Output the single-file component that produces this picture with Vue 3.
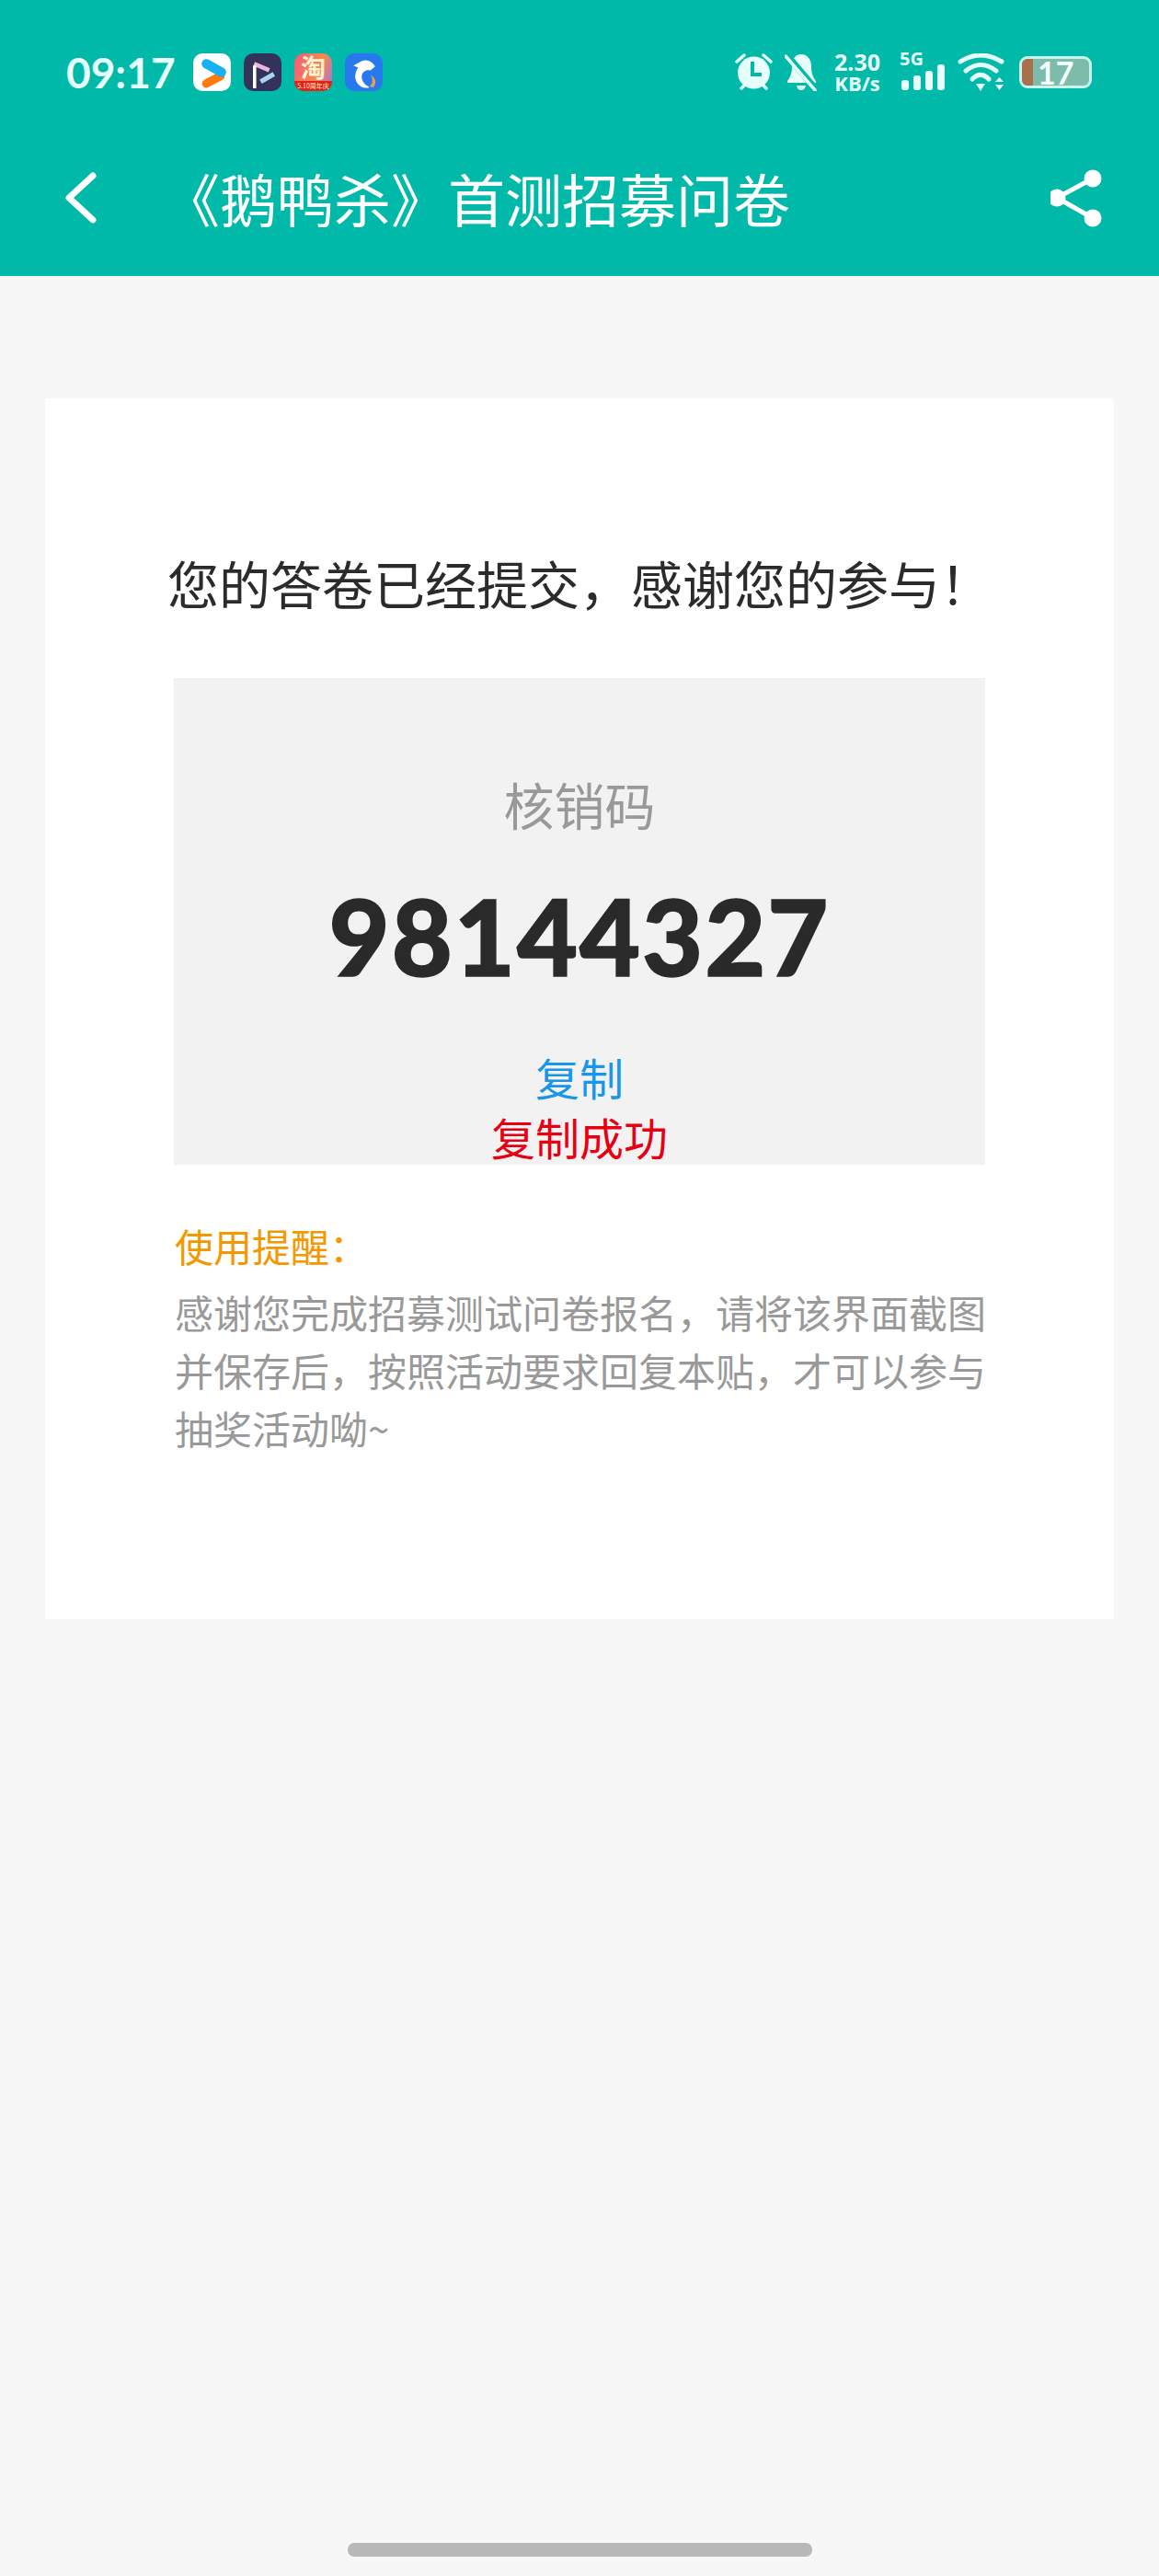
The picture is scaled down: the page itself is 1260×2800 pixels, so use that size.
<template>
  <div class="page">
    <header class="top">
      <div class="status">
        <div class="status-left">
          <span class="time">09:17</span>
          <div class="apps">
            <svg class="app" viewBox="0 0 40 40">
              <rect width="40" height="40" rx="10" fill="#fff" />
              <path d="M29 24 L14 32" stroke="#ff7a0a" stroke-width="9" fill="none" stroke-linecap="round" />
              <path d="M14 11 L30 20" stroke="#19b0f5" stroke-width="10" fill="none" stroke-linecap="round" />
            </svg>
            <svg class="app" viewBox="0 0 40 40">
              <rect width="40" height="40" rx="10" fill="#33325a" />
              <path d="M11 11 L27 18" stroke="#e6b8dc" stroke-width="4.5" fill="none" />
              <path d="M11.5 13 V37" stroke="#fff" stroke-width="3.5" fill="none" />
              <path d="M18 30 L32 22" stroke="#a8d4f2" stroke-width="5" fill="none" />
            </svg>
            <div class="app tao">
              <span class="tao-big">淘</span>
              <span class="tao-small">5.10周年庆</span>
            </div>
            <svg class="app" viewBox="0 0 40 40">
              <rect width="40" height="40" rx="10" fill="#2878ee" />
              <path d="M32 14 C29 9 24 6 18 8 L9 13 L14 15 C9 22 10 31 17 35 C20 37 24 37 26 36 C20 33 17 28 18 23 C19 19 23 17 27 18 Z" fill="#fff" />
              <path d="M26 35 C30 32 30 27 27 23 C33 26 34 32 30 36 Z" fill="#e8a04a" />
            </svg>
          </div>
        </div>
        <div class="status-right">
          <svg class="alarm" viewBox="0 0 41 42">
            <circle cx="20.5" cy="22" r="17.5" fill="#e6fffb" />
            <path d="M19 10 V24 H29" stroke="#00b9a8" stroke-width="4" fill="none" />
            <path d="M2 10 L10 3 M39 10 L31 3 M7 39 L10 36 M34 39 L31 36" stroke="#e6fffb" stroke-width="3.5" stroke-linecap="round" />
          </svg>
          <svg class="bell" viewBox="0 0 35 41">
            <path d="M18 1 C25 1 29 7 29 14 C29 22 31 26 34 30 V32 H3 V30 C6 26 8 22 8 14 C8 7 11 1 18 1 Z M13 35 H23 Q22 40 18 40 Q14 40 13 35 Z" fill="#e6fffb" />
            <path d="M1 0 L34 39" stroke="#00b9a8" stroke-width="7" />
            <path d="M1 3 L33 40" stroke="#e6fffb" stroke-width="3.5" stroke-linecap="round" />
          </svg>
          <div class="speed"><span>2.30</span><span class="unit">KB/s</span></div>
          <div class="net">
            <span class="five">5G</span>
            <div class="bars"><i v-for="h in bars" :key="h" :style="{ height: h + 'px' }"></i></div>
          </div>
          <svg class="wifi" viewBox="0 0 51 41">
            <path d="M3 9 Q25 -5 48 9 M9 19 Q25 6 42 19 M16 28 Q25 19 34 28" stroke="#e6fffb" stroke-width="5" fill="none" stroke-linecap="round" />
            <path d="M20 33 H30 L25 41 Z M41 31 L45.5 26 L50 31 Z M41 34 H50 L45.5 40 Z" fill="#e6fffb" />
          </svg>
          <div class="battery"><i class="level"></i><span>17</span></div>
        </div>
      </div>
      <div class="nav">
        <svg class="back" viewBox="0 0 36 60">
          <path d="M31 6 L5 30 L31 54" stroke="#fff" stroke-width="7" fill="none" stroke-linecap="round" stroke-linejoin="round" />
        </svg>
        <h1>《鹅鸭杀》首测招募问卷</h1>
        <svg class="share" viewBox="0 0 60 64">
          <path d="M46 11 L7 32 L46 54" stroke="#fff" stroke-width="5" fill="none" />
          <circle cx="46" cy="11" r="9.5" fill="#fff" />
          <circle cx="7" cy="32" r="9.5" fill="#fff" />
          <circle cx="46" cy="54" r="9.5" fill="#fff" />
        </svg>
      </div>
    </header>

    <main class="card">
      <p class="done">您的答卷已经提交&#xFF0C;感谢您的参与&#xFF01;</p>
      <section class="code-box">
        <div class="code-label">核销码</div>
        <div class="code">98144327</div>
        <a class="copy">复制</a>
        <div class="copied">复制成功</div>
      </section>
      <div class="tip">
        <div class="tip-title">使用提醒&#xFF1A;</div>
        <p>感谢您完成招募测试问卷报名&#xFF0C;请将该界面截图并保存后&#xFF0C;按照活动要求回复本贴&#xFF0C;才可以参与抽奖活动呦~</p>
      </div>
    </main>

    <div class="home-bar"></div>
  </div>
</template>

<script setup>
const bars = [11, 16, 21, 28];
</script>

<style>
html,
body {
  margin: 0;
  background: #f7f7f7;
}
</style>

<style scoped>
.page {
  width: 1260px;
  height: 2800px;
  display: flex;
  flex-direction: column;
  align-items: center;
  background: #f7f7f7;
  font-family: "Noto Sans CJK SC", "Noto Sans", sans-serif;
}

.top {
  width: 100%;
  height: 300px;
  background: #00b9a8;
  flex-shrink: 0;
}

.status {
  height: 156px;
  padding: 0 73px 0 72px;
  box-sizing: border-box;
  display: flex;
  justify-content: space-between;
  align-items: center;
}

.status-left,
.status-right {
  display: flex;
  align-items: center;
}

.time {
  font-family: "Lato", sans-serif;
  font-size: 46px;
  font-weight: 700;
  color: #e6fffb;
  width: 138px;
}

.apps {
  display: flex;
  gap: 14px;
}

.app {
  width: 41px;
  height: 41px;
  display: block;
}

.tao {
  display: flex;
  flex-direction: column;
  align-items: center;
  border-radius: 10px;
  background: linear-gradient(to bottom, transparent 72%, #e2231a 72%),
    linear-gradient(110deg, #f55a78, #f58a50 60%, #a06fe8);
}

.tao-big {
  height: 30px;
  font-size: 27px;
  line-height: 30px;
  font-weight: 700;
  color: #fff3d0;
}

.tao-small {
  height: 11px;
  font-size: 7px;
  line-height: 11px;
  color: #ffe9c0;
  white-space: nowrap;
}

.alarm {
  width: 41px;
  height: 42px;
  margin-right: 13px;
}

.bell {
  width: 35px;
  height: 41px;
  margin-right: 19px;
}

.speed {
  display: flex;
  flex-direction: column;
  align-items: center;
  width: 50px;
  margin: 2px 21px 0 0;
  font-family: "Open Sans", sans-serif;
  font-size: 25px;
  line-height: 23px;
  font-weight: 700;
  color: #e6fffb;
  white-space: nowrap;
}

.unit {
  font-size: 22px;
  line-height: 23px;
}

.net {
  display: flex;
  flex-direction: column;
  width: 49px;
  height: 40px;
}

.five {
  height: 12px;
  font-family: "Open Sans", sans-serif;
  font-size: 20px;
  line-height: 12px;
  font-weight: 700;
  color: #e6fffb;
}

.bars {
  display: flex;
  align-items: flex-end;
  gap: 5px;
  height: 28px;
  margin-left: 2px;
}

.bars i {
  width: 8px;
  background: #e6fffb;
  border-radius: 3px;
}

.wifi {
  width: 51px;
  height: 41px;
  margin: 0 16px 0 14px;
}

.battery {
  position: relative;
  width: 79px;
  height: 35px;
  padding-left: 17px;
  box-sizing: border-box;
  border: 3px solid #c9f5ec;
  border-radius: 9px;
  background: #7dbcab;
  font-family: "Lato", sans-serif;
  font-size: 34px;
  line-height: 29px;
  font-weight: 700;
  color: #f5fffd;
}

.level {
  position: absolute;
  left: 0;
  top: 0;
  bottom: 0;
  width: 12px;
  border-radius: 6px 0 0 6px;
  background: #a9714b;
}

.battery span {
  position: relative;
}

.nav {
  height: 144px;
  padding: 0 58px 26px 70px;
  box-sizing: border-box;
  display: flex;
  align-items: center;
}

.back {
  width: 36px;
  height: 60px;
  flex-shrink: 0;
}

h1 {
  flex: 1;
  margin: 0 0 0 71px;
  font-size: 62px;
  line-height: 80px;
  font-weight: 400;
  color: #fff;
  white-space: nowrap;
}

.share {
  width: 60px;
  height: 64px;
  flex-shrink: 0;
}

.card {
  width: 1162px;
  height: 1327px;
  margin-top: 133px;
  padding: 160px 0 0;
  box-sizing: border-box;
  background: #fff;
  display: flex;
  flex-direction: column;
  align-items: center;
}

.done {
  margin: 0;
  height: 80px;
  font-size: 56px;
  line-height: 80px;
  color: #2b2b2b;
  white-space: nowrap;
}

.code-box {
  width: 882px;
  height: 529px;
  margin-top: 64px;
  padding-top: 96px;
  box-sizing: border-box;
  background: #f2f2f2;
  text-align: center;
}

.code-label {
  font-size: 55px;
  line-height: 80px;
  color: #999;
}

.code {
  margin-top: 39px;
  font-family: "Lato", sans-serif;
  font-size: 114px;
  line-height: 130px;
  font-weight: 900;
  letter-spacing: 2px;
  -webkit-text-stroke: 1.5px #2a2a2a;
  color: #2a2a2a;
}

.copy {
  display: block;
  margin-top: 56px;
  font-size: 48px;
  line-height: 65px;
  color: #1a96e8;
}

.copied {
  font-size: 48px;
  line-height: 65px;
  color: #e60012;
}

.tip {
  width: 884px;
  padding-left: 2px;
  box-sizing: border-box;
  margin-top: 56px;
  font-size: 42px;
  line-height: 63px;
}

.tip-title {
  color: #f39800;
}

.tip p {
  margin: 9px 0 0;
  color: #999;
}

.home-bar {
  width: 505px;
  height: 15px;
  margin-top: auto;
  margin-bottom: 21px;
  border-radius: 7px;
  background: #b9b9b9;
}
</style>
